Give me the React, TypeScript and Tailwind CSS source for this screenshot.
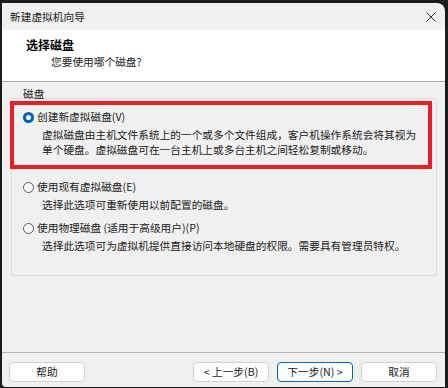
import React from "react";

function Radio({ checked }: { checked?: boolean }) {
  if (checked) {
    return (
      <span className="flex h-[11px] w-[11px] shrink-0 items-center justify-center rounded-full bg-[#005fb8]">
        <span className="h-[5px] w-[5px] rounded-full bg-white" />
      </span>
    );
  }
  return <span className="h-[11px] w-[11px] shrink-0 rounded-full border border-[#5c5c5c] bg-[#f7f7f7]" />;
}

function Option({
  label,
  hotkey,
  desc,
  checked,
}: {
  label: string;
  hotkey: string;
  desc: React.ReactNode;
  checked?: boolean;
}) {
  return (
    <div className="flex flex-col">
      <div className="flex h-[12px] items-center gap-[3px] leading-[12px]">
        <Radio checked={checked} />
        <span>
          {label}
          <span className="text-[#1a1a1a]">{hotkey}</span>
        </span>
      </div>
      <div className="mt-[4px] pl-[19px] leading-[15px]">{desc}</div>
    </div>
  );
}

function Button({ children, focused }: { children: React.ReactNode; focused?: boolean }) {
  return (
    <button
      className={
        focused
          ? "flex h-[20px] w-[76px] items-center justify-center rounded-[4px] border border-[#0067c0] bg-[#fdfdfd] leading-[12px] text-[#1a1a1a]"
          : "flex h-[20px] w-[76px] items-center justify-center rounded-[4px] border border-[#d0d0d0] bg-[#fdfdfd] leading-[12px] text-[#1a1a1a]"
      }
    >
      {children}
    </button>
  );
}

export default function App() {
  return (
    <div className="h-[388px] w-[448px] bg-[#1c1c1c] pb-[1px] pl-[2px] pr-[3px] pt-[3px] font-['Noto_Sans_CJK_SC','Microsoft_YaHei',sans-serif] text-[10.7px] text-[#1a1a1a]">
      <div className="flex h-full flex-col overflow-hidden rounded-tr-[8px] rounded-bl-[4px] bg-[#f0f0f0]">
        {/* title bar */}
        <div className="flex h-[27px] items-center justify-between pl-[8px] pr-[9px]">
          <span className="leading-[12px]">新建虚拟机向导</span>
          <svg width="10" height="10" viewBox="0 0 10 10" className="text-[#303030]">
            <path d="M0.5 0.5 L9.5 9.5 M9.5 0.5 L0.5 9.5" stroke="currentColor" strokeWidth="1" fill="none" />
          </svg>
        </div>

        {/* header */}
        <div className="flex h-[52px] flex-col border-b border-[#a8a8a8] bg-white pl-[24px] pt-[9px]">
          <span className="text-[12px] font-bold leading-[12px] text-black">选择磁盘</span>
          <span className="mt-[5px] pl-[25px] leading-[12px]">您要使用哪个磁盘?</span>
        </div>

        {/* body */}
        <div className="flex flex-1 flex-col">
          <div className="ml-[9px] mr-[8px] mt-[16px] flex h-[178px] flex-col rounded-[2px] border border-[#dcdcdc]">
            <span className="-mt-[11px] ml-[10px] w-fit bg-[#f0f0f0] px-[1px] leading-[12px]">磁盘</span>

            <div className="-ml-[2px] mr-[4px] mt-[1px] border-[4px] border-[#ed1c24] pb-[8px] pl-[9px] pt-[6px]">
              <Option
                checked
                label="创建新虚拟磁盘"
                hotkey="(V)"
                desc={
                  <>
                    虚拟磁盘由主机文件系统上的一个或多个文件组成，客户机操作系统会将其视为
                    <br />
                    单个硬盘。虚拟磁盘可在一台主机上或多台主机之间轻松复制或移动。
                  </>
                }
              />
            </div>

            <div className="mt-[12px] pl-[11px]">
              <Option label="使用现有虚拟磁盘" hotkey="(E)" desc="选择此选项可重新使用以前配置的磁盘。" />
            </div>

            <div className="mt-[10px] pl-[11px]">
              <Option
                label="使用物理磁盘 (适用于高级用户)"
                hotkey="(P)"
                desc="选择此选项可为虚拟机提供直接访问本地硬盘的权限。需要具有管理员特权。"
              />
            </div>
          </div>
        </div>

        {/* footer */}
        <div className="flex h-[35px] items-start border-t border-[#b4b4b4] pl-[7px] pr-[8px] pt-[9px]">
          <Button>帮助</Button>
          <div className="ml-auto flex gap-[8px]">
            <Button>&lt; 上一步(B)</Button>
            <Button focused>下一步(N) &gt;</Button>
            <Button>取消</Button>
          </div>
        </div>
      </div>
    </div>
  );
}
